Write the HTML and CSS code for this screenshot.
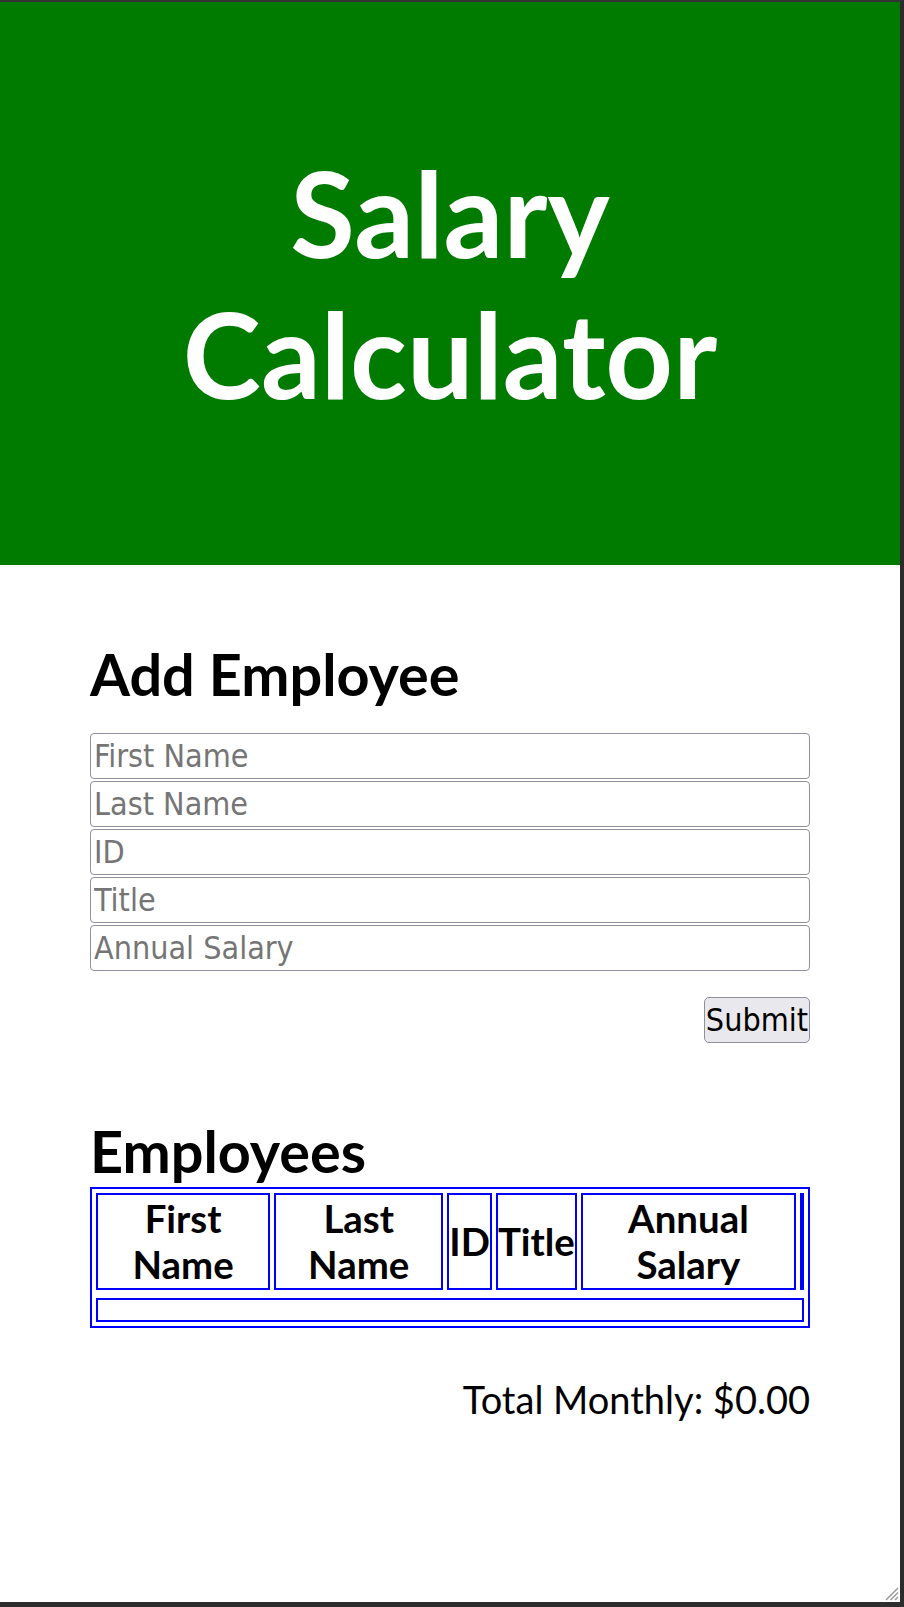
FILE: index.html
```html
<!DOCTYPE html>
<html lang="en">
<head>
<meta charset="utf-8">
<title>Salary Calculator</title>
<link rel="stylesheet" href="styles.css">
</head>
<body>
<div class="frame">
  <header class="hero">
    <h1 class="hero-title">Salary Calculator</h1>
  </header>
  <main class="content">
    <section class="add">
      <h2 class="section-title add-title">Add Employee</h2>
      <form class="form">
        <input class="field" type="text" placeholder="First Name">
        <input class="field" type="text" placeholder="Last Name">
        <input class="field" type="text" placeholder="ID">
        <input class="field" type="text" placeholder="Title">
        <input class="field" type="text" placeholder="Annual Salary">
        <div class="actions">
          <button class="submit" type="button">Submit</button>
        </div>
      </form>
    </section>
    <section class="list">
      <h2 class="section-title list-title">Employees</h2>
      <table class="employees">
        <thead>
          <tr>
            <th>First Name</th>
            <th>Last Name</th>
            <th>ID</th>
            <th>Title</th>
            <th>Annual Salary</th>
            <th class="empty-th"></th>
          </tr>
        </thead>
        <tbody>
          <tr class="gap-row"><td colspan="6" class="gap-cell"></td></tr>
          <tr><td colspan="6" class="empty-td"></td></tr>
        </tbody>
      </table>
      <p class="total">Total Monthly: $0.00</p>
    </section>
  </main>
  <svg class="grip" width="15" height="15" viewBox="0 0 15 15" aria-hidden="true">
    <path d="M14 2 L2 14 M14 6.5 L6.5 14 M14 11 L11 14" stroke="#9a9a9a" stroke-width="1.5" fill="none"/>
  </svg>
</div>
</body>
</html>
```

FILE: styles.css
```css
html, body {
  margin: 0;
  padding: 0;
  background: #2e2e2e;
}

.frame {
  position: relative;
  box-sizing: border-box;
  width: 904px;
  height: 1607px;
  border-top: 2px solid #333333;
  border-right: 4px solid #2b2b2b;
  border-bottom: 5px solid #2e2e2e;
  background: #ffffff;
  overflow: hidden;
  font-family: Lato, "Liberation Sans", sans-serif;
  font-size: 38.4px;
  color: #000;
}

.hero {
  background: #007b00;
  padding: 140px 0 141px;
}

.hero-title {
  max-width: 720px;
  margin: 0 auto;
  font-size: 118px;
  line-height: 141px;
  font-weight: 700;
  color: #ffffff;
  text-align: center;
}

.content {
  width: 720px;
  margin: 0 auto;
  padding-top: 74px;
}

.section-title {
  margin: 0;
  font-size: 57.6px;
  line-height: 70px;
  font-weight: 700;
}

.add-title {
  margin-bottom: 24px;
}

.form {
  display: flex;
  flex-direction: column;
  gap: 2px;
}

.field {
  box-sizing: border-box;
  height: 46px;
  width: 100%;
  margin: 0;
  padding: 0 3px;
  border: 1px solid #8f8f9d;
  border-radius: 4px;
  background: #fff;
  font-family: "DejaVu Sans Condensed", "DejaVu Sans", sans-serif;
  font-size: 32px;
  color: #000;
}

.field::placeholder {
  color: #757575;
}

.actions {
  display: flex;
  justify-content: flex-end;
  margin-top: 24px;
}

.submit {
  box-sizing: border-box;
  height: 46px;
  margin: 0;
  padding: 0 1px;
  border: 1px solid #8f8f9d;
  border-radius: 5px;
  background: #e9e9ed;
  font-family: "DejaVu Sans Condensed", "DejaVu Sans", sans-serif;
  font-size: 32px;
  color: #000;
}

.list {
  padding-top: 73px;
}

.list-title {
  margin-bottom: 1px;
}

.employees {
  width: 100%;
  border: 2px solid #0000ff;
  border-spacing: 4px;
}

.employees th {
  border: 2px solid #0000ff;
  padding: 1px 0;
  font-size: 38.4px;
  line-height: 45.5px;
  font-weight: 700;
  text-align: center;
  vertical-align: middle;
}

.employees .empty-th {
  padding: 0;
}

.employees td {
  border: 2px solid #0000ff;
  padding: 1px;
}

.employees .empty-td {
  height: 18px;
}

.employees .gap-cell {
  border: 0;
  padding: 0;
  height: 0;
}

.total {
  margin: 48px 0 0;
  text-align: right;
  font-size: 38px;
  line-height: 46px;
}

.grip {
  position: absolute;
  right: 1px;
  bottom: 1px;
}
```
